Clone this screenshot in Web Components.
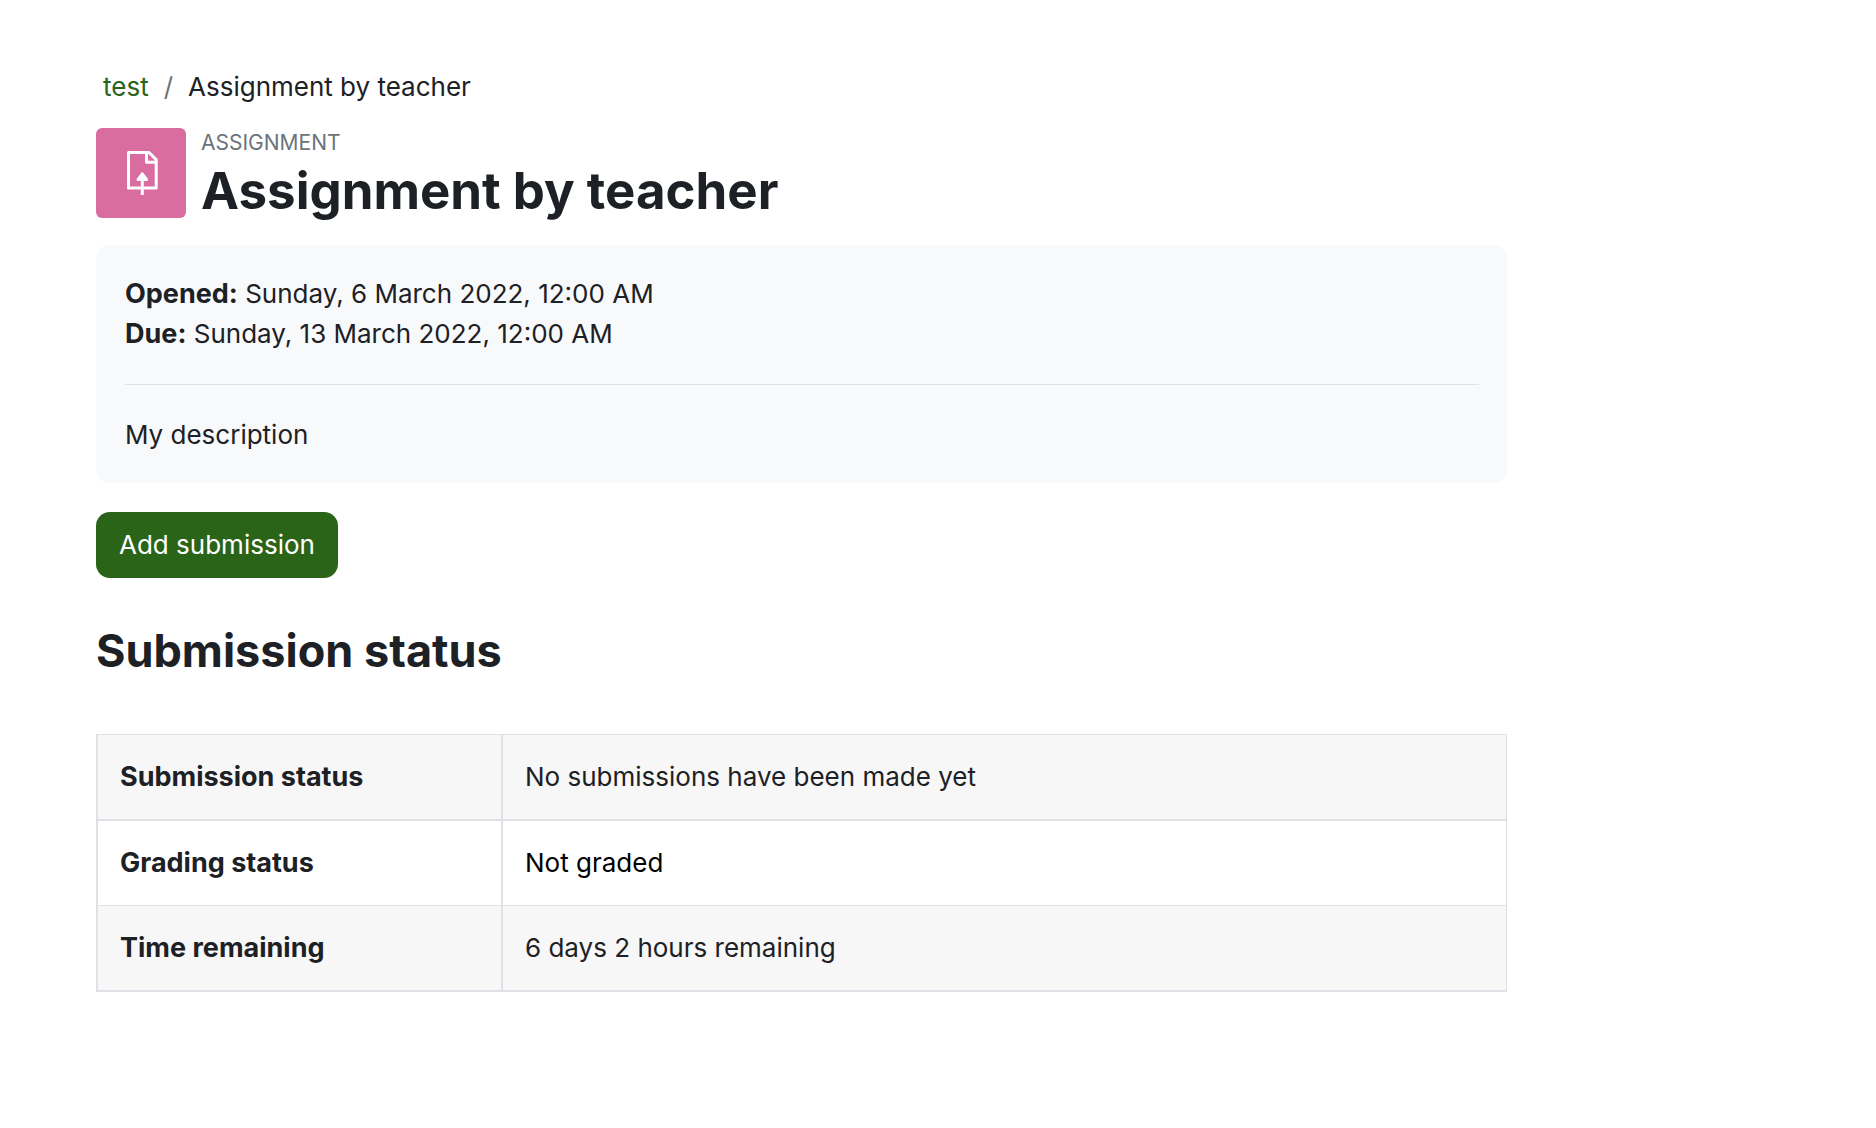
<!DOCTYPE html>
<html lang="en">
<head>
<meta charset="utf-8">
<meta name="viewport" content="width=device-width, initial-scale=1">
<title>Assignment by teacher</title>
<style>
  :root {
    --ink: #1d2125;
    --muted: #6a737b;
    --brand: #2a6418;
    --line: #dee2e6;
  }
  body {
    margin: 0;
    background: #fff;
    color: var(--ink);
    font: 400 26px/40px Inter, "Liberation Sans", sans-serif;
  }
</style>
</head>
<body>
<activity-page>
  <nav-trail slot="trail" parent="test" current="Assignment by teacher"></nav-trail>
  <activity-header slot="header" kind="Assignment">Assignment by teacher</activity-header>
  <activity-info slot="info">
    <info-date slot="dates" label="Opened:">Sunday, 6 March 2022, 12:00 AM</info-date>
    <info-date slot="dates" label="Due:">Sunday, 13 March 2022, 12:00 AM</info-date>
    My description
  </activity-info>
  <action-button>Add submission</action-button>
  <submission-status></submission-status>
</activity-page>

<script>
const define = (name, html, setup) => {
  const template = document.createElement('template');
  template.innerHTML = html;
  customElements.define(name, class extends HTMLElement {
    connectedCallback() {
      if (this.shadowRoot) return;
      const root = this.attachShadow({ mode: 'open' });
      root.append(template.content.cloneNode(true));
      if (setup) setup(this, root);
    }
  });
};

define('activity-page', `
  <style>
    :host { display: block; padding: 67px 369px 96px 96px; }
    main { display: flex; flex-direction: column; }
    .intro { display: flex; flex-direction: column; gap: 21px; margin: 21px 0 29px; }
  </style>
  <slot name="trail"></slot>
  <main>
    <div class="intro"><slot name="header"></slot><slot name="info"></slot></div>
    <slot></slot>
  </main>`);

define('nav-trail', `
  <style>
    :host { display: block; }
    ol { display: flex; gap: 15px; margin: 0; padding: 0 7px; list-style: none; }
    a { color: var(--brand); text-decoration: none; }
    .sep { color: var(--muted); }
  </style>
  <nav aria-label="Breadcrumb"><ol>
    <li><a href="#"></a></li><li class="sep" aria-hidden="true">/</li><li class="current" aria-current="page"></li>
  </ol></nav>`, (host, root) => {
  root.querySelector('a').textContent = host.getAttribute('parent');
  root.querySelector('.current').textContent = host.getAttribute('current');
});

define('activity-header', `
  <style>
    :host { display: flex; align-items: flex-start; gap: 15px; }
    .tile { flex: none; width: 90px; height: 90px; border-radius: 6px; background: #da6da0; }
    svg { display: block; }
    .kind { color: var(--muted); font-size: 21px; line-height: 30px; text-transform: uppercase; }
    h1 { margin: 0; font-size: 51px; line-height: 66px; font-weight: 700; }
  </style>
  <div class="tile">
    <svg width="90" height="90" viewBox="0 0 90 90" fill="none" stroke="#fff" stroke-width="3" stroke-linejoin="round" aria-hidden="true">
      <path d="M32.5 24.5H53L60.2 31.6V60H32.5Z"/>
      <path d="M50.5 24.5V34.2H60.2"/>
      <path d="M46.3 52V67"/>
      <path d="M46.3 45.8L42 51.6H50.6Z" fill="#fff"/>
    </svg>
  </div>
  <div><div class="kind"></div><h1><slot></slot></h1></div>`, (host, root) => {
  root.querySelector('.kind').textContent = host.getAttribute('kind');
});

define('activity-info', `
  <style>
    :host { display: block; padding: 29px 28px 28px 29px; border-radius: 14px; background: #f8f9fb; }
    .dates { padding-bottom: 30px; border-bottom: 1px solid #dfe1e4; margin-bottom: 30px; }
  </style>
  <div class="dates"><slot name="dates"></slot></div>
  <div><slot></slot></div>`);

define('info-date', `
  <style>:host { display: block; } strong { font-size: 27px; line-height: 1; font-weight: 700; }</style>
  <strong></strong> <slot></slot>`, (host, root) => {
  root.querySelector('strong').textContent = host.getAttribute('label');
});

define('action-button', `
  <style>
    :host { display: block; }
    button { border: 0; border-radius: 14px; padding: 13px 23px; background: var(--brand); color: #fff; font: inherit; cursor: pointer; }
  </style>
  <button type="button"><slot></slot></button>`);

define('submission-status', `
  <style>
    :host { display: block; margin-top: 45px; }
    h2 { margin: 0 0 55px; font-size: 45px; line-height: 56px; font-weight: 700; }
    table { width: 100%; border-collapse: separate; border-spacing: 0; border-top: 1px solid var(--line); table-layout: fixed; }
    th, td { box-sizing: border-box; padding: 22px; text-align: left; border-style: solid; border-color: var(--line); }
    th { width: 407px; font-size: 27px; font-weight: 700; border-width: 0 2px 2px; }
    td { border-width: 0 1px 2px 0; }
    tr:nth-child(even) > * { border-bottom-width: 1px; }
    tr:nth-child(odd) { background: #f7f7f7; }
    .ungraded { color: #000; }
  </style>
  <h2>Submission status</h2>
  <table><tbody>
    <tr><th scope="row">Submission status</th><td>No submissions have been made yet</td></tr>
    <tr><th scope="row">Grading status</th><td class="ungraded">Not graded</td></tr>
    <tr><th scope="row">Time remaining</th><td>6 days 2 hours remaining</td></tr>
  </tbody></table>`);
</script>
</body>
</html>
